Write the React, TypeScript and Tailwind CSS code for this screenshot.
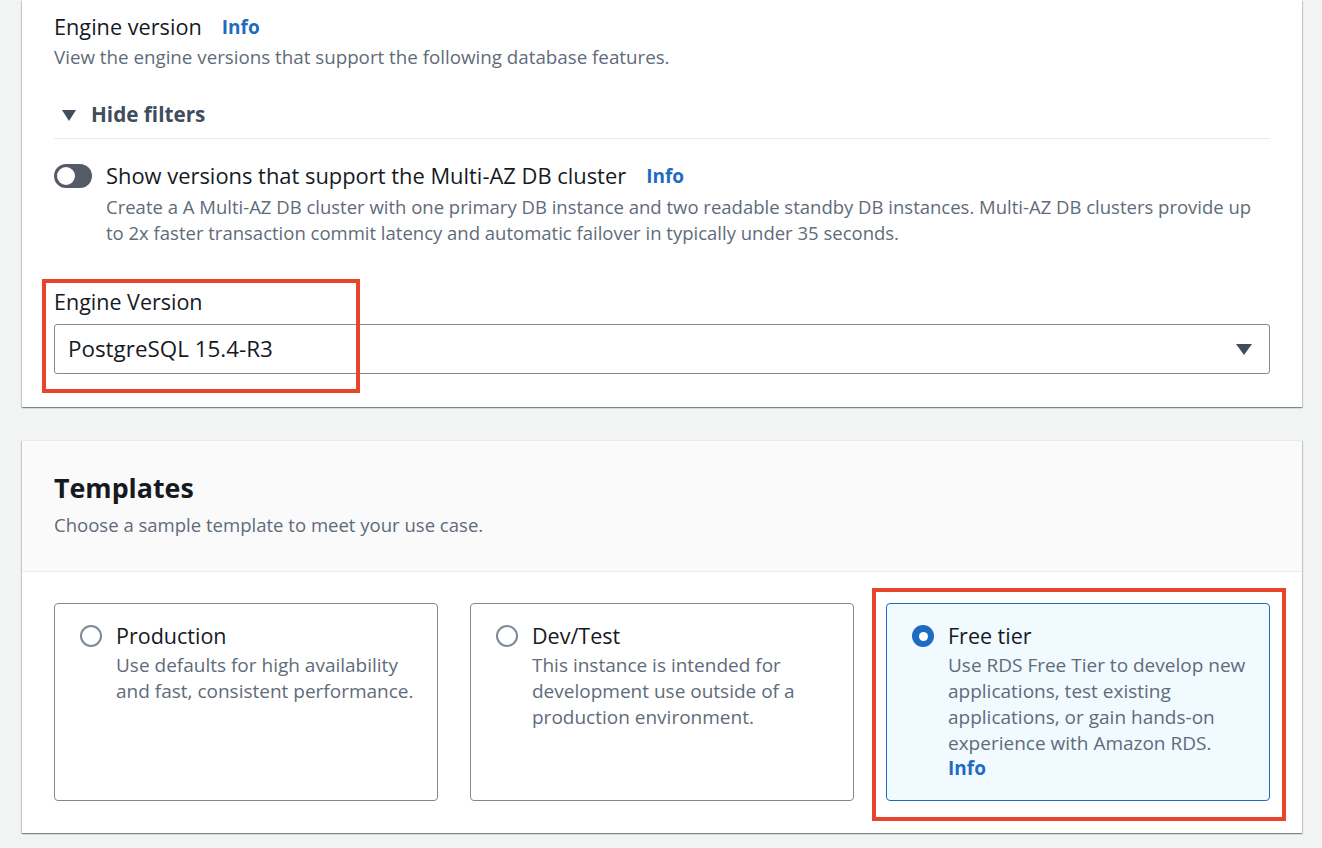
const font = "font-['Open_Sans',_'Liberation_Sans',_sans-serif]"

function InfoLink({ className = '' }: { className?: string }) {
  return <span className={`text-[19px] font-bold text-[#1f6bc1] ${className}`}>Info</span>
}

function Radio({ checked }: { checked?: boolean }) {
  if (checked) {
    return (
      <span className="mt-[1px] flex h-[22px] w-[22px] shrink-0 items-center justify-center rounded-full bg-[#1f6bc1]">
        <span className="h-[9px] w-[9px] rounded-full bg-white" />
      </span>
    )
  }
  return <span className="mt-[1px] h-[22px] w-[22px] shrink-0 rounded-full border-2 border-[#7d8998] bg-white" />
}

const cardShadow =
  'shadow-[0_1px_1px_0_rgba(0,28,36,0.3),1px_1px_1px_0_rgba(0,28,36,0.15),-1px_1px_1px_0_rgba(0,28,36,0.15)]'

const tiles = [
  {
    title: 'Production',
    text: 'Use defaults for high availability and fast, consistent performance.',
  },
  {
    title: 'Dev/Test',
    text: 'This instance is intended for development use outside of a production environment.',
  },
  {
    title: 'Free tier',
    text: 'Use RDS Free Tier to develop new applications, test existing applications, or gain hands-on experience with Amazon RDS.',
    checked: true,
    info: true,
  },
]

export default function App() {
  return (
    <div className={`min-h-[848px] w-[1322px] bg-[#f2f3f3] pl-[22px] pr-[20px] text-[#16191f] ${font}`}>
      {/* engine version card, top is scrolled away */}
      <div className={`bg-white px-8 pt-[13px] pb-[33px] ${cardShadow}`}>
        <div className="flex h-[28px] items-center gap-[20px] text-[21.7px]">
          <span>Engine version</span>
          <InfoLink />
        </div>
        <p className="mt-[3px] text-[18.75px] leading-[26px] text-[#5f6b7a]">
          View the engine versions that support the following database features.
        </p>
        <div className="mt-[31px] flex h-[28px] items-center gap-[15px] pl-[8px] text-[20.7px] font-bold text-[#414d5c]">
          <svg width="14" height="11" viewBox="0 0 14 11">
            <path d="M0 0 H14 L7 11 Z" fill="#414d5c" />
          </svg>
          <span>Hide filters</span>
        </div>
        <div className="mt-[9px] h-px bg-[#e9ebed]" />

        <div className="mt-[22px] flex gap-[14px]">
          <span className="mt-[3px] flex h-[24px] w-[38px] shrink-0 items-center rounded-full bg-[#545b64] pl-[3px]">
            <span className="h-[18px] w-[18px] rounded-full bg-white" />
          </span>
          <div>
            <div className="flex h-[30px] items-center gap-[20px] text-[21.9px]">
              <span>Show versions that support the Multi-AZ DB cluster</span>
              <InfoLink />
            </div>
            <p className="mt-[3px] text-[18.5px] leading-[26px] text-[#5f6b7a]">
              Create a A Multi-AZ DB cluster with one primary DB instance and two readable standby DB instances. Multi-AZ DB clusters provide up to 2x faster transaction commit latency and automatic failover in typically under 35 seconds.
            </p>
          </div>
        </div>

        <div className="relative mt-[42px]">
          <div className="pointer-events-none absolute left-[-12px] top-[-9px] h-[114px] w-[318px] border-4 border-[#e8432b]" />
          <div className="flex h-[28px] items-center text-[21.5px]">Engine Version</div>
          <div className="mt-[8px] flex h-[50px] items-center justify-between rounded-[3px] border border-[#7d8998] pl-[13px] pr-[17px] text-[22.4px]">
            <span>PostgreSQL 15.4-R3</span>
            <svg width="16" height="11" viewBox="0 0 16 11">
              <path d="M0 0 H16 L8 11 Z" fill="#414d5c" />
            </svg>
          </div>
        </div>
      </div>

      {/* templates card */}
      <div className={`mt-[33px] bg-white ${cardShadow}`}>
        <div className="border-t border-b border-[#e9ebed] bg-[#fafafa] px-8 pt-[29px] pb-[33px]">
          <h2 className="text-[26.8px] leading-[36px] font-bold">Templates</h2>
          <p className="mt-[6px] text-[18.55px] leading-[26px] text-[#5f6b7a]">
            Choose a sample template to meet your use case.
          </p>
        </div>
        <div className="relative grid grid-cols-3 gap-8 px-8 pt-[31px] pb-[32px]">
          {tiles.map((t) => (
            <div
              key={t.title}
              className={`relative h-[198px] rounded-[4px] border pl-[25px] pr-[20px] pt-[20px] ${
                t.checked ? 'border-[#1f6bc1] bg-[#f1faff]' : 'border-[#7d8998] bg-white'
              }`}
            >
              {t.checked && (
                <div className="pointer-events-none absolute left-[-15px] top-[-16px] h-[233px] w-[414px] border-4 border-[#e8432b]" />
              )}
              <div className="flex gap-[14px]">
                <Radio checked={t.checked} />
                <div>
                  <div className="text-[21.5px] leading-[24px]">{t.title}</div>
                  <p className="mt-[4px] text-[19px] leading-[26px] text-[#5f6b7a]">{t.text}</p>
                  {t.info && <InfoLink className="leading-[24px]" />}
                </div>
              </div>
            </div>
          ))}
        </div>
      </div>
    </div>
  )
}
